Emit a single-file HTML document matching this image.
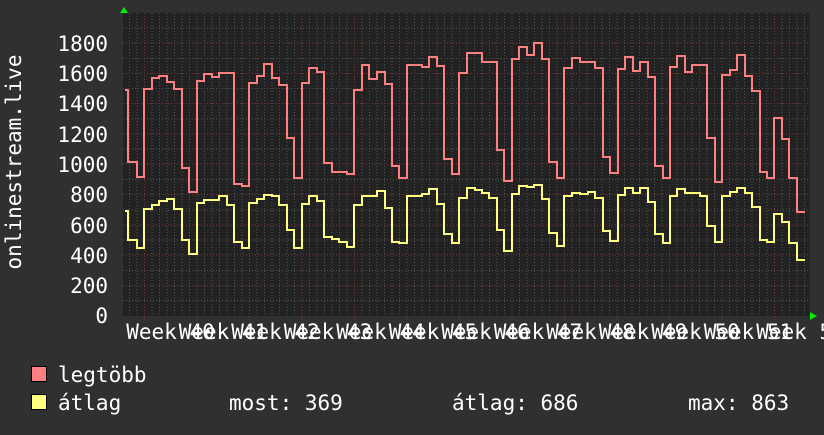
<!DOCTYPE html>
<html><head><meta charset="utf-8"><style>
html,body{margin:0;padding:0;background:#303030;}
body{width:824px;height:430px;overflow:hidden;}
svg text{font-family:"DejaVu Sans Mono","Liberation Mono",monospace;fill:#fff;font-size:21px;}
</style></head><body>
<svg width="824" height="430" xmlns="http://www.w3.org/2000/svg">
<rect x="0" y="0" width="824" height="430" fill="#303030"/>
<rect x="123" y="13" width="687" height="303" fill="#222222"/>
<g stroke="#555" stroke-width="1" stroke-dasharray="1,2" fill="none">
<path d="M123 300.5H810M123 270.5H810M123 240H810M123 210H810M123 179.5H810M123 149H810M123 119H810M123 88.5H810M123 58.5H810M123 28H810"/>
<path d="M129.5 13V316M137 13V316M152 13V316M159.5 13V316M167 13V316M174.5 13V316M182 13V316M189.5 13V316M204.5 13V316M212 13V316M219.5 13V316M227 13V316M234.5 13V316M242 13V316M257 13V316M264.5 13V316M272 13V316M279.5 13V316M287 13V316M294.5 13V316M309.5 13V316M317 13V316M324.5 13V316M332 13V316M339.5 13V316M347 13V316M362 13V316M369.5 13V316M377 13V316M384.5 13V316M392 13V316M399.5 13V316M414.5 13V316M422 13V316M429.5 13V316M437 13V316M444.5 13V316M452 13V316M467 13V316M474.5 13V316M482 13V316M489.5 13V316M497 13V316M504.5 13V316M519.5 13V316M527 13V316M534.5 13V316M542 13V316M549.5 13V316M557 13V316M572 13V316M579.5 13V316M587 13V316M594.5 13V316M602 13V316M609.5 13V316M624.5 13V316M632 13V316M639.5 13V316M647 13V316M654.5 13V316M662 13V316M677 13V316M684.5 13V316M692 13V316M699.5 13V316M707 13V316M714.5 13V316M729.5 13V316M737 13V316M744.5 13V316M752 13V316M759.5 13V316M767 13V316M782 13V316M789.5 13V316M797 13V316M804.5 13V316"/>
</g>
<g stroke="#7a3a3a" stroke-width="1" stroke-dasharray="1,2" fill="none">
<path d="M123 285.5H810M123 255H810M123 225H810M123 194.5H810M123 164H810M123 134H810M123 103.5H810M123 73.5H810M123 43H810"/>
<path d="M144.5 13V320M197 13V320M249.5 13V320M302 13V320M354.5 13V320M407 13V320M459.5 13V320M512 13V320M564.5 13V320M617 13V320M669.5 13V320M722 13V320M774.5 13V320"/>
</g>
<path fill="none" stroke="#ff8080" stroke-width="2" d="M125 90H128V162H137V177H144V89H152V78H159V76H167V82H174V89H182V168H189V192H197V81H204V74H212V77H219V73H234V184H242V186H249V83H257V76H264V64H272V78H279V85H287V138H294V178H302V83H309V68H317V72H324V163H332V172H347V174H354V90H362V65H369V79H377V72H385V84H392V166H399V178H407V65H422V67H429V57H437V66H444V159H452V174H459V73H467V53H482V62H497V150H504V181H512V59H519V47H527V55H534V43H542V59H549V162H557V178H564V68H572V58H580V62H595V68H603V157H610V173H618V69H625V57H633V71H640V62H648V77H655V166H663V178H670V67H677V56H685V72H692V65H707V138H715V182H722V75H730V70H737V55H745V76H752V91H760V172H767V178H774V118H782V139H789V178H797V212H805"/>
<path fill="none" stroke="#ffff80" stroke-width="2" d="M125 211H128V240H137V248H144V209H152V205H159V201H167V199H174V209H182V240H189V254H197V203H204V200H219V196H227V205H234V242H242V248H249V203H257V199H264V195H272V196H279V205H287V230H294V248H302V204H309V196H317V201H324V237H332V239H339V242H347V247H354V205H362V196H377V191H385V208H392V242H399V243H407V196H422V194H429V189H437V204H444V234H452V243H459V198H467V188H475V190H482V193H489V198H497V230H504V251H512V194H519V186H527V187H534V185H542V199H549V233H557V246H564V196H572V193H580V194H588V192H595V198H603V231H610V241H618V195H625V188H633V193H640V188H648V202H655V234H663V243H670V196H677V189H685V193H700V196H707V226H715V242H722V196H730V192H737V188H745V193H752V207H760V240H767V242H774V214H782V222H789V243H797V260H805"/>
<polygon points="120,13 128,13 124,7" fill="#00ee00"/>
<polygon points="810,312 810,320 817,316" fill="#00ee00"/>
<g text-anchor="end">
<text x="108" y="51">1800</text>
<text x="108" y="81">1600</text>
<text x="108" y="111">1400</text>
<text x="108" y="142">1200</text>
<text x="108" y="172">1000</text>
<text x="108" y="202">800</text>
<text x="108" y="233">600</text>
<text x="108" y="263">400</text>
<text x="108" y="293">200</text>
<text x="108" y="323">0</text>
</g>
<g text-anchor="middle">
<text x="170.5" y="339">Week 40</text>
<text x="223" y="339">Week 41</text>
<text x="275.5" y="339">Week 42</text>
<text x="328" y="339">Week 43</text>
<text x="380.5" y="339">Week 44</text>
<text x="433" y="339">Week 45</text>
<text x="485.5" y="339">Week 46</text>
<text x="538" y="339">Week 47</text>
<text x="590.5" y="339">Week 48</text>
<text x="643" y="339">Week 49</text>
<text x="695.5" y="339">Week 50</text>
<text x="748" y="339">Week 51</text>
<text x="800.5" y="339">Week 52</text>
</g>
<text transform="translate(21,162) rotate(-90)" text-anchor="middle">onlinestream.live</text>
<rect x="31.5" y="366.5" width="15" height="15" fill="#ff8080" stroke="#000"/>
<rect x="31.5" y="394.5" width="15" height="15" fill="#ffff80" stroke="#000"/>
<text x="58" y="382">legtöbb</text>
<text x="58" y="410">átlag</text>
<text x="229" y="410">most: 369</text>
<text x="452" y="410">átlag: 686</text>
<text x="688" y="410">max: 863</text>
</svg>
</body></html>
